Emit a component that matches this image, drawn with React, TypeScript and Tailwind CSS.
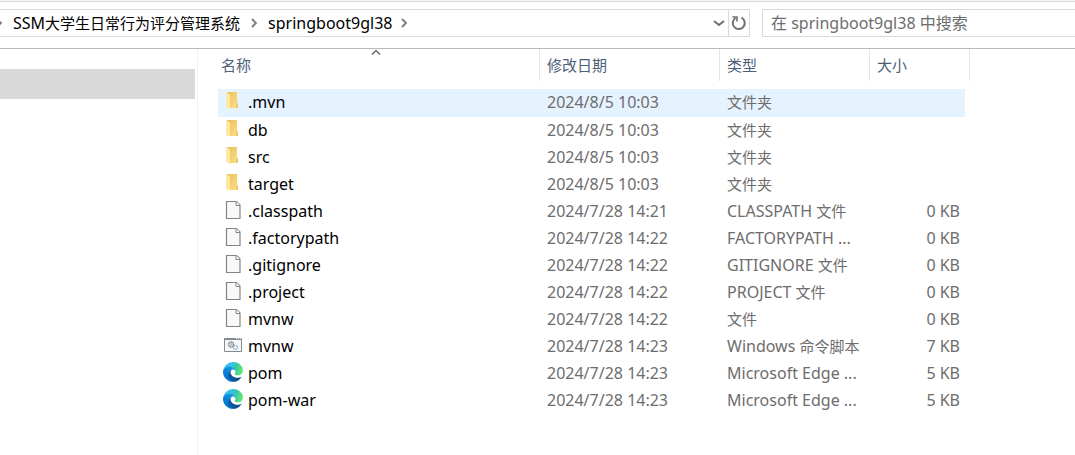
import type { ReactNode } from "react";

type Kind = "folder" | "file" | "script" | "edge";

interface Entry {
  name: string;
  kind: Kind;
  modified: string;
  type: ReactNode;
  size?: string;
}

// CJK runs are set one step smaller than the Latin text around them
function Zh({ children }: { children: ReactNode }) {
  return <span className="text-[15px]">{children}</span>;
}

const ENTRIES: Entry[] = [
  { name: ".mvn", kind: "folder", modified: "2024/8/5 10:03", type: <Zh>文件夹</Zh> },
  { name: "db", kind: "folder", modified: "2024/8/5 10:03", type: <Zh>文件夹</Zh> },
  { name: "src", kind: "folder", modified: "2024/8/5 10:03", type: <Zh>文件夹</Zh> },
  { name: "target", kind: "folder", modified: "2024/8/5 10:03", type: <Zh>文件夹</Zh> },
  { name: ".classpath", kind: "file", modified: "2024/7/28 14:21", type: <>CLASSPATH <Zh>文件</Zh></>, size: "0 KB" },
  { name: ".factorypath", kind: "file", modified: "2024/7/28 14:22", type: "FACTORYPATH ...", size: "0 KB" },
  { name: ".gitignore", kind: "file", modified: "2024/7/28 14:22", type: <>GITIGNORE <Zh>文件</Zh></>, size: "0 KB" },
  { name: ".project", kind: "file", modified: "2024/7/28 14:22", type: <>PROJECT <Zh>文件</Zh></>, size: "0 KB" },
  { name: "mvnw", kind: "file", modified: "2024/7/28 14:22", type: <Zh>文件</Zh>, size: "0 KB" },
  { name: "mvnw", kind: "script", modified: "2024/7/28 14:23", type: <>Windows <Zh>命令脚本</Zh></>, size: "7 KB" },
  { name: "pom", kind: "edge", modified: "2024/7/28 14:23", type: "Microsoft Edge ...", size: "5 KB" },
  { name: "pom-war", kind: "edge", modified: "2024/7/28 14:23", type: "Microsoft Edge ...", size: "5 KB" },
];

function EntryIcon({ kind }: { kind: Kind }) {
  const size = "mb-[2px] size-5 shrink-0";
  if (kind === "folder") {
    return (
      <svg viewBox="0 0 20 20" className={size} aria-hidden="true">
        <path d="M4 1h10v10.500l1 1V17H6z" fill="url(#folderBack)" />
        <path d="M13.500 12.500h1.500V17h-2z" fill="#eac566" />
        <path d="M3 1l4 2.500V18l-4-2z" fill="#ffe8a2" />
      </svg>
    );
  }
  if (kind === "file") {
    return (
      <svg viewBox="0 0 20 20" className={size} aria-hidden="true">
        <path d="M3.500 1.500h10l3.500 3.500v13.500H3.500z" fill="#f8f9f9" stroke="#858585" strokeWidth="1.200" />
        <path d="M13 1.500V5.500h4" fill="#fff" stroke="#858585" />
      </svg>
    );
  }
  if (kind === "script") {
    return (
      <svg viewBox="0 0 20 20" className={size} aria-hidden="true">
        <path d="M1.500 3.500h17v13h-17z" fill="#f6f7f7" stroke="#858a8e" />
        <path d="M1 3h18v2H1z" fill="#858a8e" />
        <path d="M13 3.500h1m1 0h1m1 0h1" stroke="#fff" />
        <circle cx="8" cy="9.500" r="2.600" fill="none" stroke="#777d82" strokeWidth="1.400" strokeDasharray="1.200 .5" />
        <circle cx="8" cy="9.500" r="1" fill="none" stroke="#777d82" strokeWidth=".6" />
        <circle cx="12.500" cy="12.500" r="2" fill="#fff" stroke="#76aed0" strokeWidth="1.200" strokeDasharray="1 .4" />
      </svg>
    );
  }
  return (
    <svg viewBox="4.630 4.920 256 256" className={size} aria-hidden="true">
      <path
        fill="url(#edgeBase)"
        d="M235.680 195.450a93.730 93.730 0 0 1-10.540 4.710 101.870 101.870 0 0 1-35.900 6.460c-47.320 0-88.540-32.550-88.540-74.320A31.480 31.480 0 0 1 117.130 104.610C74.330 106.410 63.330 151 63.330 177.130c0 73.880 68.090 81.370 82.760 81.370 7.910 0 19.840-2.300 27-4.560l1.310-.44a128.340 128.340 0 0 0 66.600-52.800 4 4 0 0 0-5.320-5.250z"
      />
      <path
        fill="url(#edgeSide)"
        d="M110.340 246.340A79.200 79.200 0 0 1 87.600 225a80.720 80.720 0 0 1 29.530-120.390c3.120-1.470 8.450-4.130 15.540-4a32.350 32.350 0 0 1 25.690 13 31.880 31.880 0 0 1 6.360 18.660c0-.21 24.460-79.600-80-79.600-43.900 0-80 41.660-80 78.210a130.150 130.150 0 0 0 12.110 56 128 128 0 0 0 156.380 67.110 75.550 75.550 0 0 1-62.780-8z"
      />
      <path
        fill="url(#edgeWave)"
        d="M156.940 153.780c-.81 1.050-3.300 2.500-3.300 5.660 0 2.610 1.700 5.120 4.720 7.230 14.380 10 41.490 8.680 41.560 8.680a59.560 59.560 0 0 0 30.270-8.350 61.380 61.380 0 0 0 30.430-52.880c.26-22.410-8-37.310-11.340-43.910C228.090 28.760 182.350 4.920 132.610 4.920a128 128 0 0 0-128 126.200c.48-36.540 36.800-66.050 80-66.050 3.500 0 23.460.34 42 10.070 16.340 8.580 24.900 18.940 30.850 29.210 6.180 10.670 7.280 24.150 7.280 29.520s-2.740 13.330-7.800 19.910z"
      />
    </svg>
  );
}

function IconGradients() {
  return (
    <svg className="absolute size-0" aria-hidden="true">
      <defs>
        <linearGradient id="folderBack" x1="0" y1="0" x2="1" y2="1">
          <stop offset="0" stopColor="#e8bf5c" />
          <stop offset="1" stopColor="#ffdf86" />
        </linearGradient>
        <linearGradient id="edgeBase" x1="63" y1="178" x2="241" y2="178" gradientUnits="userSpaceOnUse">
          <stop offset="0" stopColor="#0c59a4" />
          <stop offset="1" stopColor="#114a8b" />
        </linearGradient>
        <linearGradient id="edgeSide" x1="157" y1="96" x2="50" y2="215" gradientUnits="userSpaceOnUse">
          <stop offset="0" stopColor="#1b9de2" />
          <stop offset=".16" stopColor="#1595df" />
          <stop offset=".67" stopColor="#0680d7" />
          <stop offset="1" stopColor="#0078d4" />
        </linearGradient>
        <linearGradient id="edgeWave" x1="20" y1="60" x2="250" y2="130" gradientUnits="userSpaceOnUse">
          <stop offset="0" stopColor="#35c1f1" />
          <stop offset=".3" stopColor="#34c1ed" />
          <stop offset=".6" stopColor="#36c7a8" />
          <stop offset="1" stopColor="#66eb6e" />
        </linearGradient>
      </defs>
    </svg>
  );
}

function Crumb() {
  return (
    <svg viewBox="0 0 6 10" className="h-[10px] w-[6px] shrink-0" aria-hidden="true">
      <path d="M1 1l4 4-4 4" fill="none" stroke="#7a7a7a" strokeWidth="1.800" />
    </svg>
  );
}

function AddressBar() {
  return (
    <div className="flex h-[28px] gap-3">
      <nav className="flex min-w-0 flex-1 border border-l-0 border-[#d9d9d9] text-base leading-none text-black">
        <div className="flex min-w-0 flex-1 items-center">
          <div className="-ml-1 flex items-center">
            <Crumb />
          </div>
          <a href="#system" className="ml-[11px] whitespace-nowrap">SSM<Zh>大学生日常行为评分管理系统</Zh></a>
          <div className="mx-[11px]">
            <Crumb />
          </div>
          <a href="#springboot9gl38" className="mr-[9px]">springboot9gl38</a>
          <Crumb />
        </div>
        <button aria-label="展开" className="flex w-[18px] items-center justify-center">
          <svg viewBox="0 0 12 8" className="h-2 w-3" aria-hidden="true">
            <path d="M1 2l5 4 5-4" fill="none" stroke="#6e6e6e" strokeWidth="2" />
          </svg>
        </button>
        <button aria-label="刷新" className="flex w-[21px] items-center justify-center border-l border-[#d9d9d9]">
          <svg viewBox="0 0 16 16" className="size-4" aria-hidden="true">
            <path d="M10.500 2.700A6 6 0 1 1 4.500 3" fill="none" stroke="#707070" strokeWidth="2" />
            <path d="M1.500 2h4.500v4.500" fill="none" stroke="#707070" strokeWidth="1.600" />
          </svg>
        </button>
      </nav>
      <input
        aria-label="搜索"
        placeholder="在 springboot9gl38 中搜索"
        className="w-[313px] border border-r-0 border-[#d9d9d9] px-2 text-base text-[#6d6d6d] outline-none placeholder:text-[#6d6d6d]"
      />
    </div>
  );
}

function FileTable() {
  const th = "h-8 border-r border-[#e5e5e5] p-0 pl-[7px] text-left text-[15px] font-normal text-[#4c607a]";
  const td = "p-0 pb-[2px] pl-[7px] whitespace-nowrap";
  return (
    <table className="w-[752px] table-fixed border-separate border-spacing-0 text-[#6d6d6d]">
      <colgroup>
        <col className="w-[322px]" />
        <col className="w-[180px]" />
        <col className="w-[150px]" />
        <col className="w-[95px]" />
        <col className="w-[5px]" />
      </colgroup>
      <thead>
        <tr>
          <th className="relative h-8 border-r border-[#e5e5e5] p-0 pl-[3px] text-left text-[15px] font-normal text-[#4c607a]">
            名称
            <svg viewBox="0 0 10 6" className="absolute top-0 left-[153px] h-[6px] w-[10px]" aria-hidden="true">
              <path d="M1 5.500l4-4 4 4" fill="none" stroke="#555" strokeWidth="1.200" />
            </svg>
          </th>
          <th className={th}>修改日期</th>
          <th className={th}>类型</th>
          <th className={th} colSpan={2}>大小</th>
        </tr>
      </thead>
      <tbody>
        <tr>
          <td colSpan={5} className="h-2 p-0" />
        </tr>
        {ENTRIES.map((entry, i) => (
          <tr key={i} className={i === 0 ? "h-7 *:not-last:bg-[#e5f3ff]" : "h-[27px]"}>
            <td className="p-0 pb-[2px] pl-[5px]">
              <div className="flex items-center gap-[5px] leading-[20px] text-black">
                <EntryIcon kind={entry.kind} />
                {entry.name}
              </div>
            </td>
            <td className={td}>{entry.modified}</td>
            <td className={td}>{entry.type}</td>
            <td className="p-0 pr-[5px] pb-[2px] text-right">{entry.size}</td>
            <td className="p-0" />
          </tr>
        ))}
      </tbody>
    </table>
  );
}

export default function App() {
  return (
    <div className="flex min-h-screen flex-col bg-white font-['Noto_Sans','Noto_Sans_CJK_SC',sans-serif] text-base leading-[20px]">
      <IconGradients />
      <header className="border-b border-[#b9b9b9]">
        <div className="h-[2px] border-b border-[#d9d9d9] bg-[#f5f5f5]" />
        <div className="pt-[7px] pb-[11px]">
          <AddressBar />
        </div>
      </header>
      <div className="flex flex-1">
        <aside className="w-[198px] shrink-0 border-r border-[#f3f3f3] pt-5 pr-[2px]">
          <div className="h-[30px] bg-[#d9d9d9]" />
        </aside>
        <main className="min-w-0 flex-1 pl-5">
          <FileTable />
        </main>
      </div>
    </div>
  );
}
